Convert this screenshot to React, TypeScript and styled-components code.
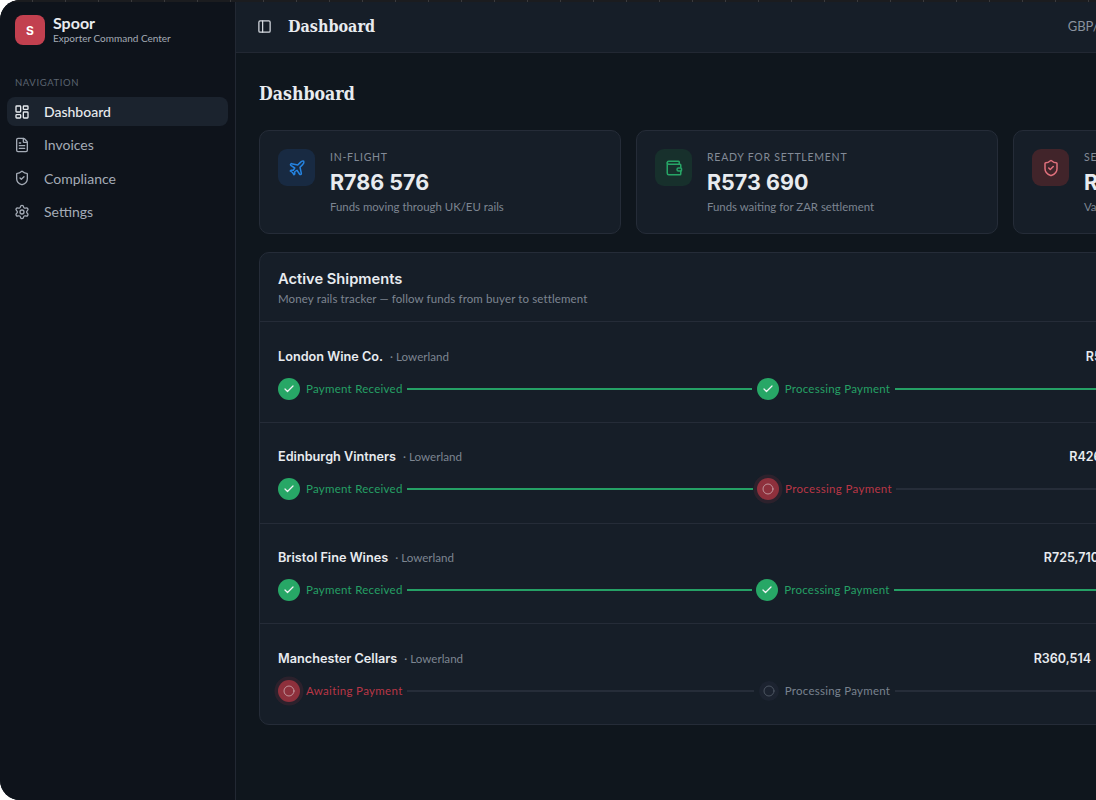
import React from 'react';
import styled, { createGlobalStyle } from 'styled-components';
import {
  Check,
  Circle,
  FileText,
  LayoutDashboard,
  PanelLeft,
  Plane,
  Settings,
  ShieldCheck,
  Wallet,
} from 'lucide-react';

const bodyFont = `Lato, "Noto Sans", "Liberation Sans", sans-serif`;
const displayFont = `"DejaVu Serif Condensed", "DejaVu Serif", "Liberation Serif", serif`;
const numberFont = `Inter, "Liberation Sans", sans-serif`;

type Tone = 'blue' | 'green' | 'red';
type StepState = 'done' | 'active' | 'pending';

const toneColors: Record<Tone, { bg: string; fg: string }> = {
  blue: { bg: '#182a42', fg: '#2583e0' },
  green: { bg: '#17302c', fg: '#27a566' },
  red: { bg: '#41242a', fg: '#e0707c' },
};

const stepText: Record<StepState, string> = {
  done: '#25a065',
  active: '#b93646',
  pending: '#79828f',
};

const GlobalStyle = createGlobalStyle`
  html, body {
    margin: 0;
    height: 100%;
    background: #ffffff;
    overflow: hidden;
  }
  * { box-sizing: border-box; }
`;

const Shell = styled.div`
  position: relative;
  display: flex;
  width: 1398px;
  height: 800px;
  overflow: hidden;
  border-radius: 20px;
  background: #0f161d;
  font-family: ${bodyFont};
  color: #e8ebef;

  /* thin ruler strip along the very top edge */
  &::before {
    content: '';
    position: absolute;
    top: 0;
    left: 0;
    right: 0;
    height: 2px;
    background: repeating-linear-gradient(90deg, #1b1c1f 0 32px, #3a3a3c 32px 33px);
  }
`;

const Sidebar = styled.aside`
  flex: 0 0 236px;
  background: #0e131b;
  border-right: 1px solid #222833;
  padding: 14px 7px;
`;

const Brand = styled.div`
  display: flex;
  align-items: center;
  gap: 8px;
  padding: 0 8px;
  height: 32px;
`;

const BrandMark = styled.div`
  width: 30px;
  height: 30px;
  border-radius: 8px;
  background: #c2404f;
  color: #fff;
  display: flex;
  align-items: center;
  justify-content: center;
  font-family: ${numberFont};
  font-size: 12px;
  font-weight: 700;
`;

const BrandText = styled.div`
  display: flex;
  flex-direction: column;
`;

const BrandName = styled.div`
  font-size: 16px;
  font-weight: 700;
  line-height: 17px;
  margin-top: -2px;
`;

const BrandSub = styled.div`
  font-size: 10px;
  line-height: 12px;
  margin-top: 1px;
  color: #a4abb6;
`;

const NavLabel = styled.div`
  margin: 30px 8px 7px;
  font-size: 9.5px;
  line-height: 14px;
  letter-spacing: 0.6px;
  color: #5b6470;
`;

const NavList = styled.nav`
  display: flex;
  flex-direction: column;
  gap: 4px;
`;

const NavItem = styled.a<{ $active?: boolean }>`
  display: flex;
  align-items: center;
  gap: 14px;
  height: 29.3px;
  padding: 0 7px;
  border-radius: 8px;
  font-size: 14px;
  color: ${(p) => (p.$active ? '#e8ebef' : '#a4abb6')};
  font-weight: ${(p) => (p.$active ? 500 : 400)};
  background: ${(p) => (p.$active ? '#1b232e' : 'transparent')};

  svg {
    width: 16px;
    height: 16px;
  }
`;

const Main = styled.main`
  flex: 1;
  min-width: 0;
  display: flex;
  flex-direction: column;
`;

const Topbar = styled.header`
  height: 53px;
  flex: 0 0 53px;
  display: flex;
  align-items: center;
  justify-content: space-between;
  padding: 0 23px 0 21px;
  background: #161e28;
  border-bottom: 1px solid #222833;
`;

const TopLeft = styled.div`
  display: flex;
  align-items: center;
  gap: 16px;
  color: #d5d9df;
`;

const TopTitle = styled.div`
  font-family: ${displayFont};
  font-size: 16px;
  font-weight: 700;
  color: #e8ebef;
`;

const TopRight = styled.div`
  display: flex;
  align-items: center;
  gap: 14.5px;
`;

const Rate = styled.div`
  font-size: 13px;
  white-space: nowrap;
  color: #8a929e;
`;

const Content = styled.div`
  padding: 0 23px;
`;

const PageTitle = styled.h1`
  margin: 29px 0 24px;
  font-family: ${displayFont};
  font-size: 17.6px;
  line-height: 24px;
  font-weight: 700;
  color: #e8ebef;
`;

const StatGrid = styled.div`
  display: grid;
  grid-template-columns: repeat(3, 1fr);
  gap: 15px;
  margin-bottom: 18px;
`;

const StatCard = styled.div`
  display: flex;
  gap: 15px;
  height: 104px;
  padding: 18px;
  background: #161e28;
  border: 1px solid #252c38;
  border-radius: 10px;
`;

const StatIcon = styled.div<{ $tone: Tone }>`
  flex: 0 0 37px;
  width: 37px;
  height: 37px;
  border-radius: 9px;
  display: flex;
  align-items: center;
  justify-content: center;
  background: ${(p) => toneColors[p.$tone].bg};
  color: ${(p) => toneColors[p.$tone].fg};

  svg {
    width: 18px;
    height: 18px;
  }
`;

const StatBody = styled.div`
  display: flex;
  flex-direction: column;
`;

const StatLabel = styled.div`
  font-size: 10.5px;
  line-height: 16px;
  letter-spacing: 0.75px;
  white-space: nowrap;
  color: #838b97;
`;

const StatValue = styled.div`
  font-family: ${numberFont};
  font-size: 21.5px;
  line-height: 30px;
  margin-top: 2px;
  font-weight: 700;
  color: #e8ebef;
`;

const StatNote = styled.div`
  font-size: 11.4px;
  line-height: 16px;
  margin-top: 2px;
  white-space: nowrap;
  color: #7d8591;
`;

const Panel = styled.section`
  background: #161e28;
  border: 1px solid #252c38;
  border-radius: 10px;
`;

const PanelHead = styled.div`
  height: 69px;
  padding: 16px 18px 0;
  border-bottom: 1px solid #252c38;
`;

const PanelTitle = styled.h2`
  margin: 0;
  font-family: ${numberFont};
  font-size: 14.7px;
  line-height: 20px;
  font-weight: 600;
  color: #e8ebef;
`;

const PanelSub = styled.div`
  font-size: 11.5px;
  line-height: 16px;
  margin-top: 2px;
  letter-spacing: 0.12px;
  color: #7d8591;
`;

const ShipmentRow = styled.div`
  height: 100.8px;
  padding: 24px 18px 0;
  border-bottom: 1px solid #252c38;

  &:last-child {
    height: 100px;
    border-bottom: 0;
  }
`;

const RowTop = styled.div`
  display: flex;
  align-items: center;
  justify-content: space-between;
  height: 20px;
  margin-bottom: 11.7px;
`;

const RowName = styled.div`
  display: flex;
  align-items: baseline;
  gap: 7px;
`;

const Buyer = styled.span`
  font-family: ${numberFont};
  font-size: 12.7px;
  font-weight: 600;
  color: #e8ebef;
`;

const Region = styled.span`
  font-size: 11.6px;
  color: #7d8591;
`;

const RowRight = styled.div<{ $trail: number }>`
  display: flex;
  align-items: center;
  padding-right: ${(p) => p.$trail}px;
`;

const Amount = styled.span`
  font-family: ${numberFont};
  font-size: 12.5px;
  font-weight: 600;
  color: #e8ebef;
`;

const Track = styled.div`
  display: flex;
  align-items: center;
  gap: 4.5px;
  height: 22px;
`;

const Step = styled.div`
  display: flex;
  align-items: center;
  gap: 6px;
`;

const StepDot = styled.div<{ $state: StepState }>`
  width: ${(p) => (p.$state === 'pending' ? 20 : 22)}px;
  height: ${(p) => (p.$state === 'pending' ? 20 : 22)}px;
  border-radius: 50%;
  display: flex;
  align-items: center;
  justify-content: center;
  color: ${(p) =>
    p.$state === 'pending' ? '#5b6470' : p.$state === 'active' ? '#cfb4b8' : '#f1f3f5'};
  background: ${(p) =>
    p.$state === 'done' ? '#27a766' : p.$state === 'active' ? '#8e303c' : '#1c2330'};
  box-shadow: ${(p) => (p.$state === 'active' ? '0 0 0 3.5px rgba(185, 54, 70, 0.14)' : 'none')};

  svg {
    width: 12px;
    height: 12px;
  }
`;

const StepLabel = styled.span<{ $state: StepState }>`
  font-size: 11.5px;
  line-height: 16px;
  white-space: nowrap;
  letter-spacing: ${(p) => (p.$state === 'active' ? 0.33 : 0.25)}px;
  color: ${(p) => stepText[p.$state]};
`;

const Rail = styled.div<{ $done: boolean }>`
  flex: 1;
  height: 2px;
  background: ${(p) => (p.$done ? '#25a065' : '#262d39')};
`;

const stats: { tone: Tone; icon: React.ReactNode; label: string; value: string; note: string }[] = [
  { tone: 'blue', icon: <Plane />, label: 'IN-FLIGHT', value: 'R786 576', note: 'Funds moving through UK/EU rails' },
  { tone: 'green', icon: <Wallet />, label: 'READY FOR SETTLEMENT', value: 'R573 690', note: 'Funds waiting for ZAR settlement' },
  { tone: 'red', icon: <ShieldCheck />, label: 'SECURITY HELD', value: 'R412 300', note: 'Value held against open claims' },
];

type StepData = { label: string; state: StepState };

const shipments: { buyer: string; amount: string; trail: number; steps: StepData[] }[] = [
  {
    buyer: 'London Wine Co.',
    amount: 'R518,240',
    trail: 213,
    steps: [
      { label: 'Payment Received', state: 'done' },
      { label: 'Processing Payment', state: 'done' },
      { label: 'ZAR Settlement', state: 'done' },
    ],
  },
  {
    buyer: 'Edinburgh Vintners',
    amount: 'R426,380',
    trail: 227,
    steps: [
      { label: 'Payment Received', state: 'done' },
      { label: 'Processing Payment', state: 'active' },
      { label: 'ZAR Settlement', state: 'pending' },
    ],
  },
  {
    buyer: 'Bristol Fine Wines',
    amount: 'R725,710',
    trail: 257,
    steps: [
      { label: 'Payment Received', state: 'done' },
      { label: 'Processing Payment', state: 'done' },
      { label: 'ZAR Settlement', state: 'active' },
    ],
  },
  {
    buyer: 'Manchester Cellars',
    amount: 'R360,514',
    trail: 265,
    steps: [
      { label: 'Awaiting Payment', state: 'active' },
      { label: 'Processing Payment', state: 'pending' },
      { label: 'ZAR Settlement', state: 'pending' },
    ],
  },
];

function StepIcon({ state }: { state: StepState }) {
  return state === 'done' ? <Check strokeWidth={2.5} /> : <Circle strokeWidth={1.5} />;
}

export default function App() {
  return (
    <>
      <GlobalStyle />
      <Shell>
        <Sidebar>
          <Brand>
            <BrandMark>S</BrandMark>
            <BrandText>
              <BrandName>Spoor</BrandName>
              <BrandSub>Exporter Command Center</BrandSub>
            </BrandText>
          </Brand>
          <NavLabel>NAVIGATION</NavLabel>
          <NavList>
            <NavItem $active><LayoutDashboard />Dashboard</NavItem>
            <NavItem><FileText />Invoices</NavItem>
            <NavItem><ShieldCheck />Compliance</NavItem>
            <NavItem><Settings />Settings</NavItem>
          </NavList>
        </Sidebar>
        <Main>
          <Topbar>
            <TopLeft>
              <PanelLeft size={15} />
              <TopTitle>Dashboard</TopTitle>
            </TopLeft>
            <TopRight>
              <Rate>GBP/ZAR 23.41</Rate>
              <Rate>EUR/ZAR 20.15</Rate>
              <Rate>USD/ZAR 18.62</Rate>
            </TopRight>
          </Topbar>
          <Content>
            <PageTitle>Dashboard</PageTitle>
            <StatGrid>
              {stats.map((s) => (
                <StatCard key={s.label}>
                  <StatIcon $tone={s.tone}>{s.icon}</StatIcon>
                  <StatBody>
                    <StatLabel>{s.label}</StatLabel>
                    <StatValue>{s.value}</StatValue>
                    <StatNote>{s.note}</StatNote>
                  </StatBody>
                </StatCard>
              ))}
            </StatGrid>
            <Panel>
              <PanelHead>
                <PanelTitle>Active Shipments</PanelTitle>
                <PanelSub>Money rails tracker — follow funds from buyer to settlement</PanelSub>
              </PanelHead>
              {shipments.map((row) => (
                <ShipmentRow key={row.buyer}>
                  <RowTop>
                    <RowName>
                      <Buyer>{row.buyer}</Buyer>
                      <Region>· Lowerland</Region>
                    </RowName>
                    <RowRight $trail={row.trail}>
                      <Amount>{row.amount}</Amount>
                    </RowRight>
                  </RowTop>
                  <Track>
                    {row.steps.map((step, i) => (
                      <React.Fragment key={step.label}>
                        {i > 0 && <Rail $done={row.steps[i - 1].state === 'done'} />}
                        <Step>
                          <StepDot $state={step.state}><StepIcon state={step.state} /></StepDot>
                          <StepLabel $state={step.state}>{step.label}</StepLabel>
                        </Step>
                      </React.Fragment>
                    ))}
                  </Track>
                </ShipmentRow>
              ))}
            </Panel>
          </Content>
        </Main>
      </Shell>
    </>
  );
}
